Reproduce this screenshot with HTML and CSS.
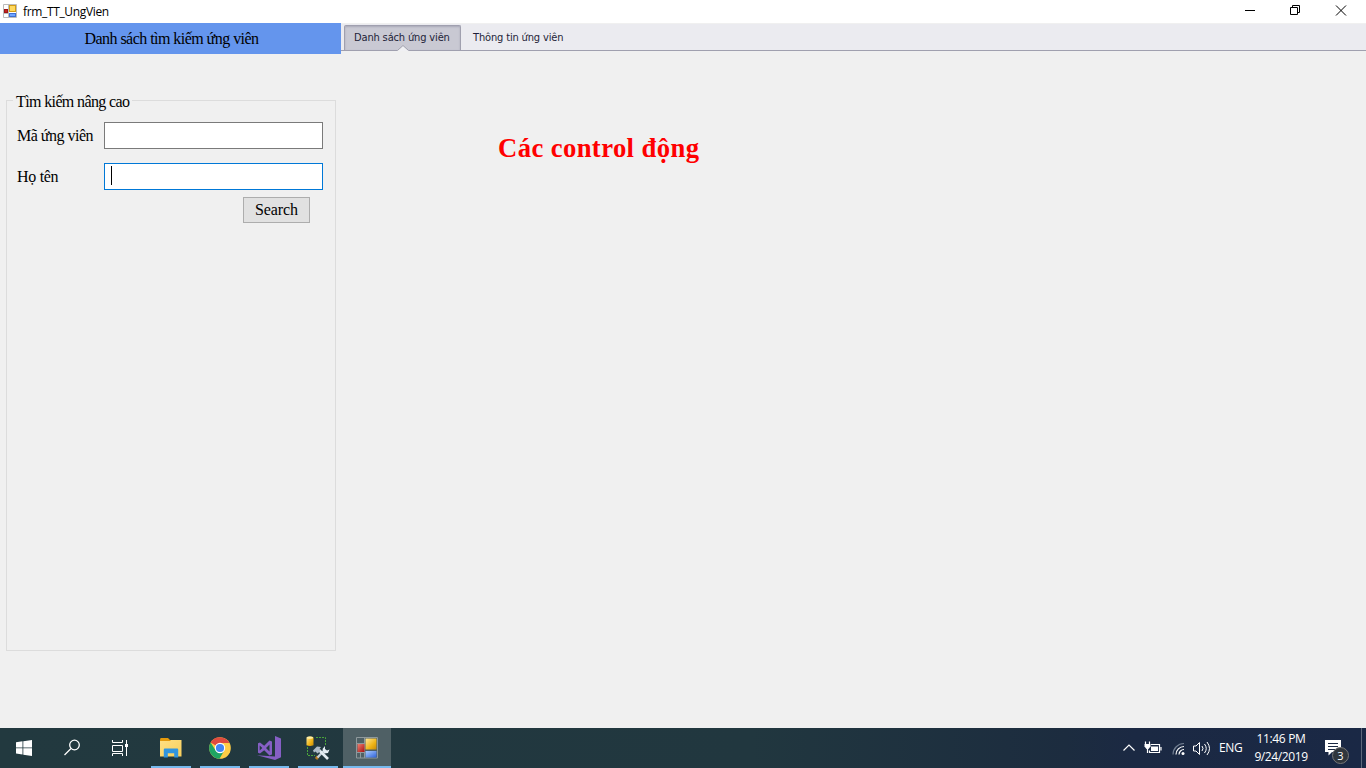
FILE: index.html
```html
<!DOCTYPE html>
<html lang="vi">
<head>
<meta charset="utf-8">
<title>frm_TT_UngVien</title>
<link rel="stylesheet" href="styles.css">
</head>
<body>
<svg width="0" height="0" class="defs" aria-hidden="true">
  <defs>
    <linearGradient id="gold" x1="0" y1="0" x2="1" y2="1"><stop offset="0" stop-color="#ffe79a"/><stop offset=".6" stop-color="#efb416"/><stop offset="1" stop-color="#c78b08"/></linearGradient>
    <linearGradient id="blue" x1="0" y1="0" x2="1" y2="1"><stop offset="0" stop-color="#a9cbff"/><stop offset="1" stop-color="#2f62d8"/></linearGradient>
    <linearGradient id="red" x1="0" y1="0" x2="1" y2="1"><stop offset="0" stop-color="#f08070"/><stop offset="1" stop-color="#a80f0f"/></linearGradient>
    <linearGradient id="folder" x1="0" y1="0" x2="1" y2="1"><stop offset="0" stop-color="#ffe083"/><stop offset="1" stop-color="#f8cf5c"/></linearGradient>
    <symbol id="form" viewBox="0 0 22 22">
      <path d="M.5.5h21v20.500H.5zM.5 6.500h8M8.500.5v20.500M4.500 15v6M.5 15.500h8" fill="none" stroke="#8f999c"/>
      <rect x="9.500" y="1.500" width="11" height="11" fill="url(#gold)"/>
      <rect x="1.500" y="7" width="7" height="8" fill="url(#red)"/>
      <rect x="9.500" y="14" width="11" height="6.500" fill="url(#blue)"/>
    </symbol>
  </defs>
</svg>
<header class="titlebar">
  <svg class="appicon" width="14" height="14" viewBox="0 0 14 14"><path d="M.5.5h13v13H.5zM.5 9.500h5M5.500.5v13" fill="#fff" stroke="#bbb"/><rect x="6.500" y="1.500" width="6" height="6" fill="#ffd95e" stroke="#d29c16"/><rect x="1.500" y="5.500" width="3" height="3" fill="#c42222" stroke="#9d1616"/><rect x="6.500" y="9.500" width="6" height="3" fill="#70a5ff" stroke="#3f70d4"/></svg>
  <span class="caption">frm_TT_UngVien</span>
  <svg class="winbuttons" width="106" height="12" viewBox="0 0 106 12" fill="none" stroke="#000"><path d="M0 5.500h10M45.500 2.500h7v7h-7zM47.500 2V.5h7v7H53M91 .5l10 10M101 .5l-10 10"/></svg>
</header>
<main class="client">
  <section class="side">
    <h2 class="banner"><span>Danh sách tìm kiếm ứng viên</span></h2>
    <fieldset class="group">
      <legend>Tìm kiếm nâng cao</legend>
      <div class="row"><label class="l1">Mã ứng viên</label><div class="field"></div></div>
      <div class="row"><label class="l2">Họ tên</label><div class="field focus"><i class="caret"></i></div></div>
      <button class="search">Search</button>
    </fieldset>
  </section>
  <section class="content">
    <nav class="tabs">
      <div class="tab active"><span>Danh sách ứng viên</span><svg class="notch" width="12" height="6" viewBox="0 0 12 6"><path d="M0 6L6 .5l6 5.500z" fill="#f0f0f3"/><path d="M.5 5.500L6 .5l5.500 5" fill="none" stroke="#a0a0ac"/></svg></div>
      <div class="tab second"><span>Thông tin ứng viên</span></div>
    </nav>
    <h1 class="heading">Các control động</h1>
  </section>
</main>
<footer class="taskbar">
  <div class="item start"><svg width="16" height="16" viewBox="0 0 16 16" fill="#fff"><path d="M0 2.200L6.500 1.300v6.200H0zM7.300 1.200L16 0v7.500H7.300zM0 8.300h6.500v6.200L0 13.600zM7.300 8.300H16V16l-8.700-1.300z"/></svg></div>
  <div class="item"><svg width="18" height="18" viewBox="0 0 18 18" fill="none" stroke="#fff" stroke-width="1.300"><circle cx="11.500" cy="6" r="4.800"/><path d="M8 9.500L1.500 16"/></svg></div>
  <div class="item taskview"><svg width="17" height="16" viewBox="0 0 17 16" fill="none" stroke="#fff"><path d="M.5 0v2.500h10V0M.5 5.500h10v6H.5zM.5 16v-2.500h10V16M14.500 0v16"/><rect x="13" y="4" width="3" height="3" fill="#fff" stroke="none"/></svg></div>
  <div class="item open explorer"><svg width="22" height="20" viewBox="0 0 22 20"><path d="M0 2q0-2 1-2h7l2 2h11v4H0z" fill="#e49a0c"/><path d="M0 3h10l1-1h10.500v16.500H0z" fill="url(#folder)"/><path d="M3.800 19.500v-8q0-1 1-1h12.400q1 0 1 1v8h-4v-4.200H7.800v4.200z" fill="#3195df"/></svg></div>
  <div class="item open chrome"><svg width="22" height="22" viewBox="0 0 22 22"><circle cx="11" cy="11" r="10.800" fill="#ffcd46"/><path d="M11 11L1.600 5.600A10.800 10.800 0 0 1 20.400 6H11z" fill="#df4b3f"/><path d="M1.600 5.600A10.800 10.800 0 0 0 10.500 21.800L15.300 13.500 11 11 6.700 13.500z" fill="#1fa463"/><circle cx="11" cy="11" r="5.200" fill="#fff"/><circle cx="11" cy="11" r="4.100" fill="#4285f4"/></svg></div>
  <div class="item open vs"><svg width="24" height="24" viewBox="0 0 24 24"><path d="M18 0l6 2.500v18.800L18 24 0 19.200l18 1.200z" fill="#865fc5"/><path d="M1 7.200l2-.8 4.200 3.400L12.500 4.500l2.500 1v13l-2.500 1-5.300-5.300L3 17.600l-2-.8zM2.700 9.500v5L5.300 12zM12.500 8.500L9 12l3.500 3.500z" fill="#865fc5" fill-rule="evenodd"/></svg></div>
  <div class="item open tools"><svg width="24" height="24" viewBox="0 0 24 24"><path d="M10 1.500h9.500V10M1.500 11v8.500H9" fill="none" stroke="#4aa53a" stroke-dasharray="2 1"/><path d="M.5 1.500q3.500-2 7 0v7.800q-3.500 1.500-7 0z" fill="url(#gold)"/><ellipse cx="4" cy="1.700" rx="3.200" ry="1.100" fill="#fff0a5"/><path d="M10 23l2-2.500" stroke="#b7791f" stroke-width="3"/><path d="M11.500 21.500L19 13.500" stroke="#c3ced8" stroke-width="2.200"/><path d="M13 14l9 9" stroke="#e4edf3" stroke-width="2.600"/><path d="M7 14.500l4-4 4 .5-1.500 2 1 2-3 2.500-2-2-1.500 1z" fill="#aebbc8"/><path d="M16.500 13l2.500-3v3l2 1.500 2.500-1-1.500 3.500-4 .5z" fill="#e4edf3"/></svg></div>
  <div class="item open current"><svg width="22" height="22"><use href="#form"/></svg></div>
  <div class="tray">
    <svg width="94" height="16" viewBox="0 0 94 16" fill="none" stroke="#fff" stroke-width="1.200">
      <path d="M.5 10.500L6 5l5.500 5.500"/>
      <path d="M28 4.500h8.500v8H26.500v-2M38 7v3.500M22.500 1.500v3M26.500 1.500v3M24.500 8v5"/><rect x="28" y="6.500" width="7" height="4.500" fill="#fff" stroke="none"/><path d="M21.500 4h6v2.500L25.500 9h-2l-2-2.500z" fill="#fff" stroke="none"/>
      <path d="M50 14.500A11 11 0 0 1 61 3.500" stroke="#727f92"/><path d="M53 14.500a8 8 0 0 1 8-8M56 14.500a5 5 0 0 1 5-5"/><circle cx="60" cy="13.500" r="1.500" fill="#fff" stroke="none"/>
      <path d="M70.500 6h2.500l3.500-3.500v12L73 11h-2.500zM79 6q2 2.500 0 5M81.500 4q3.500 4.500 0 9M84 2q5 6.500 0 13" stroke-width="1"/>
    </svg>
    <span class="lang">ENG</span>
    <div class="clock"><span class="time">11:46 PM</span><span class="date">9/24/2019</span></div>
    <div class="action"><svg width="16" height="16" viewBox="0 0 16 16"><path d="M0 0h16v12H7l-3.500 3.500V12H0z" fill="#fff"/><path d="M3 3.500h10M3 6.500h10M3 9.500h7" stroke="#1b2943"/></svg><b class="badge">3</b></div>
    <i class="edge"></i>
  </div>
</footer>
</body>
</html>
```
FILE: styles.css
```css
* { box-sizing: border-box; }
body { margin: 0; width: 1366px; height: 768px; overflow: hidden; display: flex; flex-direction: column; background: #f0f0f0; color: #000; font-family: "Liberation Serif", serif; }
.defs { position: absolute; }
span, label, legend, h1 { white-space: nowrap; }
.titlebar { height: 23px; background: #fff; display: flex; align-items: flex-start; padding: 4px 0 0 3px; flex: none; }
.caption { margin: 0 auto 0 6px; font: 12px/16px "Open Sans", sans-serif; letter-spacing: -0.35px; }
.winbuttons { margin: 1px 15px 0 0; }
.client { flex: 1; display: flex; }
.side { width: 341px; display: flex; flex-direction: column; }
.banner { margin: 0; height: 31px; background: #6495ed; display: flex; justify-content: center; padding-left: 2px; font: 16px/31px "Liberation Serif", serif; letter-spacing: -0.54px; }
.group { margin: 35px 5px 0 6px; height: 562px; border: 1px solid #dcdcdc; padding: 11px 12px 0 10px; }
legend { margin-left: -4px; padding: 4px 3px 0; font-size: 16px; line-height: 18px; letter-spacing: -0.62px; }
.row { display: flex; height: 27px; margin-bottom: 14px; align-items: center; }
.row label { width: 87px; font-size: 16px; line-height: 27px; }
.l1 { letter-spacing: -0.5px; }
.l2 { letter-spacing: -0.3px; }
.field { width: 219px; height: 27px; border: 1px solid #7a7a7a; background: #fff; padding: 2px 6px; }
.focus { border-color: #0078d7; }
.caret { display: block; width: 1px; height: 19px; background: #000; }
.search { display: block; width: 67px; height: 26px; margin: -7px 0 0 226px; padding: 0; border: 1px solid #adadad; background: #e1e1e1; font: 16px "Liberation Serif", serif; letter-spacing: -0.1px; color: #000; }
.content { flex: 1; }
.tabs { height: 28px; background: #ebebf0; border-top: 1px solid #f0f0f0; border-bottom: 1px solid #a0a0af; display: flex; padding: 1px 0 0 3px; }
.tab { height: 25px; padding: 0 0 0 12px; font: 11px/23px "DejaVu Sans Condensed", "DejaVu Sans", sans-serif; color: #1e1e38; letter-spacing: -0.15px; }
.second { line-height: 25px; }
.active { width: 117px; padding-left: 9px; background: #c9c9d3; border: 1px solid #a0a0af; border-bottom: 0; border-radius: 2px 2px 0 0; box-shadow: inset 0 1px 2px #a9a9b8; position: relative; }
.notch { position: absolute; left: 52px; bottom: -1px; }
.heading { margin: 82px 0 0 157px; color: #f00; font-size: 26.67px; line-height: 30px; font-weight: bold; letter-spacing: 0.4px; }
.taskbar { height: 40px; flex: none; display: flex; background: linear-gradient(90deg, #22393f 0%, #21373f 55%, #1c2c3f 78%, #1b2943 83%, #1a2845 100%); color: #fff; }
.item { width: 48px; height: 40px; display: flex; align-items: center; justify-content: center; }
.taskview { margin-right: 3px; }
.open { width: 40px; margin-right: 9px; border-bottom: 2px solid #76b9ed; padding-top: 2px; }
.explorer { margin-left: 4px; }
.tools { margin-right: 5px; }
.current { width: 48px; background: #4f6065; margin-right: 0; }
.tray { margin-left: auto; display: flex; align-items: center; font: 12px/18px "Open Sans", sans-serif; }
.lang { width: 24px; margin-left: 2px; letter-spacing: -0.4px; }
.clock { width: 54px; margin-left: 11px; margin-right: 1px; display: flex; flex-direction: column; align-items: center; letter-spacing: -0.4px; }
.time { letter-spacing: -0.35px; }
.action { position: relative; width: 16px; height: 16px; margin-left: 16px; }
.badge { position: absolute; left: 7px; top: 7px; width: 17px; height: 17px; border-radius: 50%; border: 1px solid #777; background: #30363d; font: 11px/15px "Open Sans", sans-serif; text-align: center; }
.edge { width: 1px; height: 40px; background: #5d687b; margin-left: 20px; margin-right: 4px; }
```
